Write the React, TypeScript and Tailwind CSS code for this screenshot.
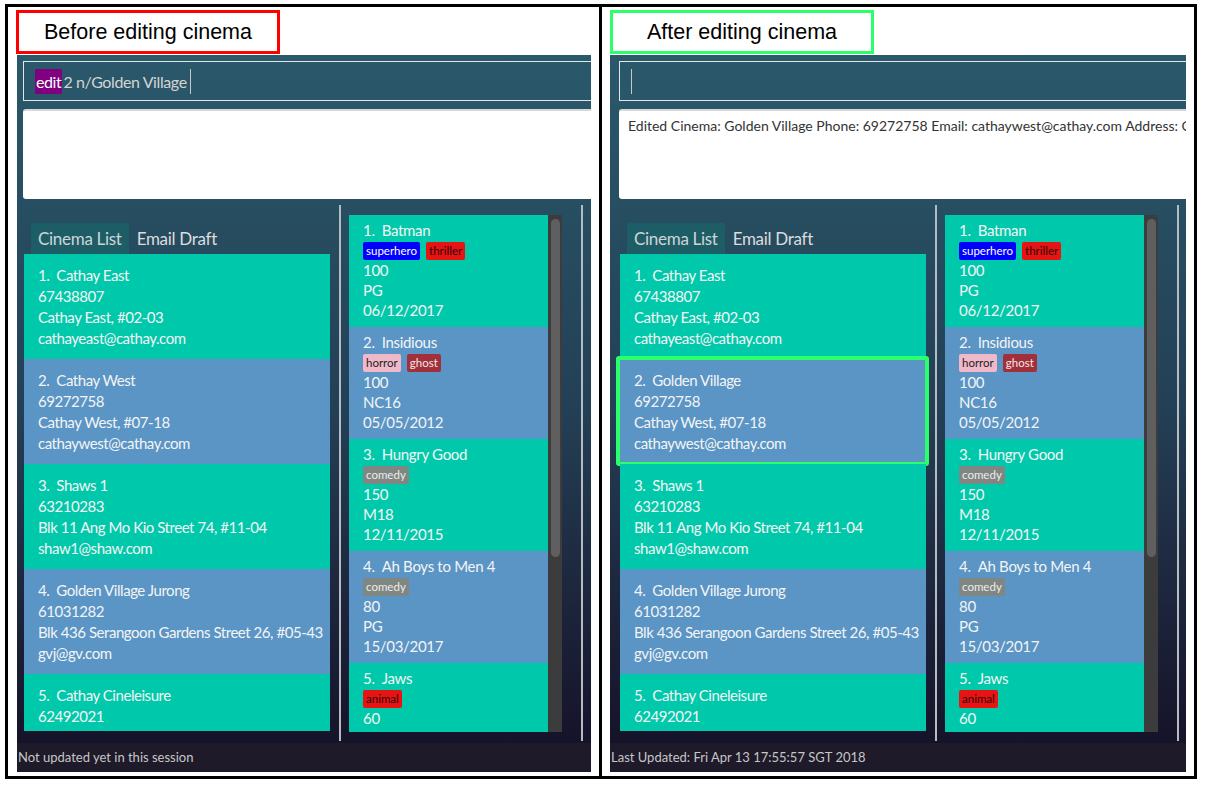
import React from "react";

type Cinema = { name: string; phone: string; addr?: string; email?: string };
type Movie = { title: string; tags: string[]; dur: string; rating?: string; date?: string };

const cinemasBefore: Cinema[] = [
  { name: "Cathay East", phone: "67438807", addr: "Cathay East, #02-03", email: "cathayeast@cathay.com" },
  { name: "Cathay West", phone: "69272758", addr: "Cathay West, #07-18", email: "cathaywest@cathay.com" },
  { name: "Shaws 1", phone: "63210283", addr: "Blk 11 Ang Mo Kio Street 74, #11-04", email: "shaw1@shaw.com" },
  { name: "Golden Village Jurong", phone: "61031282", addr: "Blk 436 Serangoon Gardens Street 26, #05-43", email: "gvj@gv.com" },
  { name: "Cathay Cineleisure", phone: "62492021" },
];

const cinemasAfter: Cinema[] = cinemasBefore.map((c, i) => (i === 1 ? { ...c, name: "Golden Village" } : c));

const movies: Movie[] = [
  { title: "Batman", tags: ["superhero", "thriller"], dur: "100", rating: "PG", date: "06/12/2017" },
  { title: "Insidious", tags: ["horror", "ghost"], dur: "100", rating: "NC16", date: "05/05/2012" },
  { title: "Hungry Good", tags: ["comedy"], dur: "150", rating: "M18", date: "12/11/2015" },
  { title: "Ah Boys to Men 4", tags: ["comedy"], dur: "80", rating: "PG", date: "15/03/2017" },
  { title: "Jaws", tags: ["animal"], dur: "60" },
];

const tagClass: Record<string, string> = {
  superhero: "bg-[#0000ff] text-white",
  thriller: "bg-[#e81414] text-[#2a0606]",
  horror: "bg-[#f0b9c9] text-[#1e1e1e]",
  ghost: "bg-[#a2303a] text-[#f3e6e6]",
  comedy: "bg-[#808782] text-[#ececec]",
  animal: "bg-[#e81414] text-[#2a0606]",
};

function CinemaCard({ c, i, highlight }: { c: Cinema; i: number; highlight?: boolean }) {
  const bg = i % 2 === 0 ? "bg-[#00c9ab]" : "bg-[#5a95c6]";
  return (
    <div className={`relative h-[105px] shrink-0 ${bg} pl-[14px] pt-[11px] text-[15px] leading-[21px] tracking-[-0.45px] text-[#f4f4f4] whitespace-nowrap`}>
      <div className="flex">
        <span>{i + 1}.</span>
        <span className="ml-[7px]">{c.name}</span>
      </div>
      <div>{c.phone}</div>
      {c.addr && <div>{c.addr}</div>}
      {c.email && <div>{c.email}</div>}
      {highlight && (
        <div className="absolute -left-[4px] -right-[3px] -top-[3px] -bottom-[2px] border-[4px] border-[#2bff6b] rounded-[3px]" />
      )}
    </div>
  );
}

function MovieCard({ m, i }: { m: Movie; i: number }) {
  const bg = i % 2 === 0 ? "bg-[#00c9ab]" : "bg-[#5a95c6]";
  return (
    <div className={`h-[112px] shrink-0 ${bg} pl-[14px] pt-[5px] text-[15px] tracking-[-0.3px] text-[#f4f4f4] whitespace-nowrap`}>
      <div className="flex leading-[21px]">
        <span>{i + 1}.</span>
        <span className="ml-[7px]">{m.title}</span>
      </div>
      <div className="flex gap-[6px] mt-[1px] h-[18px]">
        {m.tags.map((t) => (
          <span key={t} className={`h-[18px] px-[3px] rounded-[2px] text-[11.5px] tracking-normal leading-[18px] ${tagClass[t]}`}>
            {t}
          </span>
        ))}
      </div>
      <div className="leading-[20px]">{m.dur}</div>
      {m.rating && <div className="leading-[20px]">{m.rating}</div>}
      {m.date && <div className="leading-[20px]">{m.date}</div>}
    </div>
  );
}

function AppPanel({ after }: { after?: boolean }) {
  const cinemas = after ? cinemasAfter : cinemasBefore;
  return (
    <div
      className={`${after ? "w-[576px]" : "w-[574px]"} h-[717px] overflow-hidden flex flex-col bg-linear-to-b from-[#2a596b] via-[#233f55] to-[#140f26]`}
      style={{ fontFamily: "Lato, 'Noto Sans', sans-serif" }}
    >
      <div className={`w-[640px] shrink-0 ${after ? "pl-[3px]" : ""}`}>
        <div className="pt-[6px] pl-[6px]">
          <div className="h-[40px] w-[620px] border border-[#e6e6e6] flex items-center pl-[11px] text-[16px] tracking-[-0.4px] text-[#d4d4d4]">
            {after ? (
              <span className="w-[1px] h-[25px] bg-[#c8c8c8]" />
            ) : (
              <>
                <span className="bg-[#800080] text-white h-[25px] leading-[25px] px-[1px] rounded-[1px]">edit</span>
                <span className="ml-[1px] leading-[25px]">2 n/Golden Village</span>
                <span className="w-[1px] h-[25px] bg-[#c8c8c8] ml-[3px]" />
              </>
            )}
          </div>
          <div className="mt-[8px] h-[90px] w-[620px] bg-white rounded-[3px] border-t-[2px] border-[#d8d8d8] pl-[9px] pt-[4px] text-[14px] text-[#333] whitespace-nowrap overflow-hidden">
            {after ? "Edited Cinema: Golden Village Phone: 69272758 Email: cathaywest@cathay.com Address: Cathay West, #07-18" : ""}
          </div>
        </div>
        <div className="h-[544px] flex">
          <div className="w-[322px] shrink-0 pl-[7px] pt-[23px] flex flex-col">
            <div className="h-[32px] pl-[7px] flex items-end text-[17px] tracking-[-0.3px] text-[#cfd4d8]">
              <div className="h-[31px] px-[7px] bg-[#1d5e66] rounded-t-[2px] flex items-center">Cinema List</div>
              <div className="h-[31px] px-[8px] flex items-center text-[#dcdcdc]">Email Draft</div>
            </div>
            <div className="w-[306px] h-[477px] overflow-y-clip overflow-x-visible flex flex-col">
              {cinemas.map((c, i) => (
                <CinemaCard key={i} c={c} i={i} highlight={after && i === 1} />
              ))}
            </div>
          </div>
          <div className="mt-[6px] h-[536px] w-[2px] shrink-0 bg-[#b4bcc2]" />
          <div className="ml-[8px] mt-[16px] h-[517px] w-[213px] shrink-0 flex">
            <div className="w-[199px] h-full overflow-hidden flex flex-col">
              {movies.map((m, i) => (
                <MovieCard key={i} m={m} i={i} />
              ))}
            </div>
            <div className="w-[14px] h-full bg-[#3c3c3c] pt-[4px] pl-[3px]">
              <div className="w-[9px] h-[338px] rounded-full bg-[#5f5f5f]" />
            </div>
          </div>
          <div className="ml-[19px] mt-[6px] h-[536px] w-[2px] shrink-0 bg-[#b4bcc2]" />
        </div>
      </div>
      <div className="h-[29px] shrink-0 bg-[#1e1a2a] flex items-center pl-[1px] text-[13px] text-[#c6c6c6] whitespace-nowrap">
        {after ? "Last Updated: Fri Apr 13 17:55:57 SGT 2018" : "Not updated yet in this session"}
      </div>
    </div>
  );
}

function Label({ text, color }: { text: string; color: string }) {
  return (
    <div
      className={`w-[264px] h-[44px] border-[3px] ${color} bg-white flex items-center justify-center text-[21.5px] text-black`}
      style={{ fontFamily: "'Liberation Sans', Arial, sans-serif" }}
    >
      {text}
    </div>
  );
}

export default function App() {
  return (
    <div className="w-[1210px] h-[786px] bg-white pt-[4px] pl-[5px]">
      <div className="w-[1192px] h-[775px] border-[3px] border-black flex">
        <div className="w-[591px] shrink-0 pl-[8px] pt-[3px] flex flex-col">
          <Label text="Before editing cinema" color="border-[#ff0000]" />
          <div className="pl-[1px] mt-[1px]">
            <AppPanel />
          </div>
        </div>
        <div className="w-[3px] shrink-0 bg-black" />
        <div className="flex-1 pl-[8px] pt-[3px] flex flex-col">
          <Label text="After editing cinema" color="border-[#2bff6b]" />
          <div className="mt-[1px]">
            <AppPanel after />
          </div>
        </div>
      </div>
    </div>
  );
}
